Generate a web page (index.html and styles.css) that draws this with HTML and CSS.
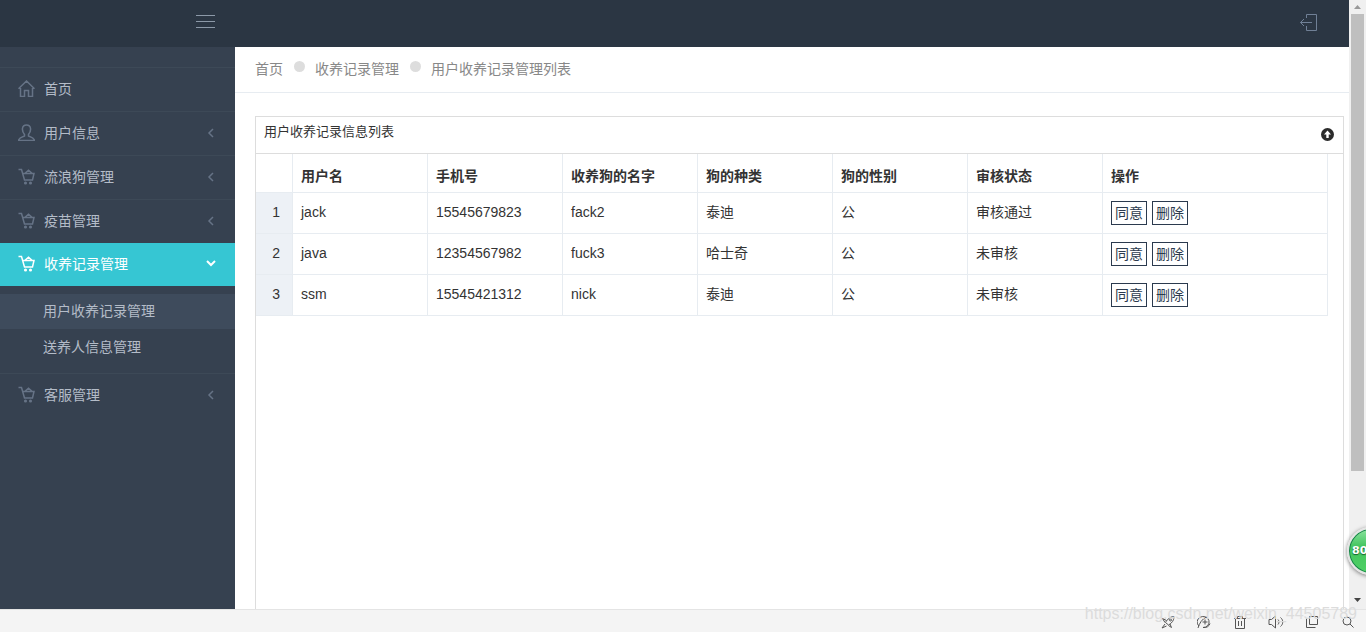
FILE: index.html
```html
<!DOCTYPE html>
<html lang="zh-CN">
<head>
<meta charset="utf-8">
<title>用户收养记录管理列表</title>
<link rel="stylesheet" href="styles.css">
</head>
<body>
<svg class="sprite" aria-hidden="true">
  <symbol id="cart" viewBox="0 0 17 17"><path d="M.5 1.500h3L6.500 12h8l1.500-6.500H4.800M7 5.300l3.500-3 3.500 3"/><circle cx="7.500" cy="15" r=".8"/><circle cx="12.500" cy="15" r=".8"/></symbol>
  <symbol id="left" viewBox="0 0 8 10"><path d="M6 1L2 5l4 4"/></symbol>
</svg>
<div class="window">
  <div class="page">
    <header class="topbar">
      <button class="icon-button menu-toggle" aria-label="菜单"><svg width="20" height="14" viewBox="0 0 20 14"><path d="M0 .5h19M0 6.500h19M0 12.500h19"/></svg></button>
      <a class="logout" href="#" aria-label="退出"><svg width="19" height="18" viewBox="0 0 19 18"><path d="M7.500 5V1.500h10v16h-10V13M13 9.500H1.500M5 6L1.500 9.500 5 13"/></svg></a>
    </header>
    <div class="body">
      <nav class="sidebar">
        <ul class="menu">
          <li><a class="menu-link" href="#"><svg class="icon" viewBox="0 0 17 17"><path d="M.5 8.700L8.500 1l8 7.700M2.500 8v8.500h4v-6h4v6h4V8"/></svg><span>首页</span></a></li>
          <li><a class="menu-link" href="#"><svg class="icon" viewBox="0 0 17 17"><path d="M6.500 10.500C3.500 7 3.500 1 8.500 1s5 6 2 9.500v1.500c2 .8 5.500 1.300 6 4.500H.5c.5-3.200 4-3.700 6-4.500z"/></svg><span>用户信息</span><svg class="arrow"><use href="#left"/></svg></a></li>
          <li><a class="menu-link" href="#"><svg class="icon"><use href="#cart"/></svg><span>流浪狗管理</span><svg class="arrow"><use href="#left"/></svg></a></li>
          <li><a class="menu-link" href="#"><svg class="icon"><use href="#cart"/></svg><span>疫苗管理</span><svg class="arrow"><use href="#left"/></svg></a></li>
          <li class="open">
            <a class="menu-link" href="#"><svg class="icon"><use href="#cart"/></svg><span>收养记录管理</span><svg class="arrow-down" viewBox="0 0 10 7"><path d="M1 1l4 4 4-4"/></svg></a>
            <ul class="submenu">
              <li><a class="sub-link current" href="#">用户收养记录管理</a></li>
              <li><a class="sub-link" href="#">送养人信息管理</a></li>
            </ul>
          </li>
          <li><a class="menu-link" href="#"><svg class="icon"><use href="#cart"/></svg><span>客服管理</span><svg class="arrow"><use href="#left"/></svg></a></li>
        </ul>
      </nav>
      <main class="main">
        <div class="breadcrumb">
          <a href="#">首页</a><i class="dot"></i><a href="#">收养记录管理</a><i class="dot"></i><a href="#">用户收养记录管理列表</a>
        </div>
        <section class="panel">
          <div class="panel-head">
            <h1>用户收养记录信息列表</h1>
            <button class="icon-button collapse" aria-label="收起"><svg width="13" height="13" viewBox="0 0 13 13"><circle cx="6.500" cy="6.500" r="6.500"/><path d="M6.500 2.500l3.500 4H7.700v3.500H5.300V6.500H3z"/></svg></button>
          </div>
          <div class="table-area">
            <table>
              <colgroup><col class="col-no"><col class="col-data"><col class="col-data"><col class="col-data"><col class="col-data"><col class="col-data"><col class="col-data"><col></colgroup>
              <thead><tr><th></th><th>用户名</th><th>手机号</th><th>收养狗的名字</th><th>狗的种类</th><th>狗的性别</th><th>审核状态</th><th>操作</th></tr></thead>
              <tbody>
                <tr><td class="no">1</td><td>jack</td><td>15545679823</td><td>fack2</td><td>泰迪</td><td>公</td><td>审核通过</td><td><div class="actions"><button>同意</button><button>删除</button></div></td></tr>
                <tr><td class="no">2</td><td>java</td><td>12354567982</td><td>fuck3</td><td>哈士奇</td><td>公</td><td>未审核</td><td><div class="actions"><button>同意</button><button>删除</button></div></td></tr>
                <tr><td class="no">3</td><td>ssm</td><td>15545421312</td><td>nick</td><td>泰迪</td><td>公</td><td>未审核</td><td><div class="actions"><button>同意</button><button>删除</button></div></td></tr>
              </tbody>
            </table>
          </div>
        </section>
      </main>
    </div>
  </div>
  <div class="scrollbar" aria-hidden="true">
    <svg class="scroll-arrow up" width="7" height="4" viewBox="0 0 7 4"><path d="M0 4l3.500-4L7 4z"/></svg>
    <div class="track"><div class="thumb"></div></div>
    <svg class="scroll-arrow" width="7" height="4" viewBox="0 0 7 4"><path d="M0 0l3.500 4L7 0z"/></svg>
  </div>
</div>
<footer class="statusbar">
  <button class="icon-button" aria-label="加速"><svg width="14" height="14" viewBox="0 0 14 14"><path d="M4.500 7.500C6.500 4 9.500 1.500 13 1.500c0 4-2 6.500-5.500 8.500zM5.500 5.500L1.500 3.500 4 7.500M9 9l1.500 3.500-3-2M4 9L1 13l4.500-2"/><circle cx="9.500" cy="5" r="1"/></svg></button>
  <button class="icon-button" aria-label="刷新"><svg width="14" height="14" viewBox="0 0 14 14"><path d="M2 11a6 5.500 0 1 1 4 1.500M1 13C2.500 8 5 4 9.500 2M5.500 7h5M8 4.500v5M6 12.500c3.500.5 6-1 7-4"/></svg></button>
  <button class="icon-button" aria-label="清理"><svg width="14" height="14" viewBox="0 0 14 14"><path d="M1 3.500h12M4.500 3V1.500h5V3M2.500 4v9.500h9V4M5.500 6v5M8.500 6v5"/></svg></button>
  <button class="icon-button" aria-label="声音"><svg width="16" height="14" viewBox="0 0 16 14"><path d="M1 4.500h2.500L7.500 1v12L3.500 9.500H1zM10 4.500c1.300 1.500 1.300 3.500 0 5M12.500 2.500c3 2.500 3 6.500 0 9"/></svg></button>
  <button class="icon-button" aria-label="窗口"><svg width="14" height="14" viewBox="0 0 14 14"><path d="M4.500 1.500h8v8h-8zM1.500 3.500v9h9"/></svg></button>
  <button class="icon-button" aria-label="搜索"><svg width="12" height="12" viewBox="0 0 12 12"><circle cx="5" cy="5" r="4"/><path d="M8 8l3.500 3.500"/></svg></button>
</footer>
<div class="watermark">https://blog.csdn.net/weixin_44505789</div>
<div class="ball">80</div>
</body>
</html>
```

FILE: styles.css
```css
* { box-sizing: border-box; }
body {
  position: relative;
  display: flex;
  flex-direction: column;
  height: 100vh;
  margin: 0;
  overflow: hidden;
  background: #fff;
  color: #333;
  font: 14px/20px "Liberation Sans", "Noto Sans CJK SC", sans-serif;
}
ul { margin: 0; padding: 0; list-style: none; }
a { color: inherit; text-decoration: none; }
svg { display: block; fill: none; stroke: currentColor; }
.sprite { position: absolute; width: 0; height: 0; }
button { font: inherit; color: inherit; margin: 0; cursor: pointer; }
.icon-button { padding: 0; border: 0; background: none; }

.window { flex: 1; display: flex; min-height: 0; }
.page { flex: 1; display: flex; flex-direction: column; min-width: 0; }
.topbar {
  flex: none;
  display: flex;
  justify-content: space-between;
  align-items: center;
  height: 47px;
  padding: 0 31px 4px 196px;
  background: #2b3643;
  color: #8c99a8;
}
.logout { color: #708096; }
.body { flex: 1; display: flex; min-height: 0; }

.sidebar { flex: none; width: 235px; padding-top: 20px; background: #364150; color: #b4bcc8; }
.menu > li { border-top: 1px solid #3d4957; }
.menu > .open { border-top: 0; }
.menu-link { display: flex; align-items: center; gap: 9px; height: 43px; padding: 0 19px 2px 18px; }
.icon { width: 17px; height: 17px; color: #667386; stroke-width: 1.5; }
.arrow, .arrow-down { margin-left: auto; margin-right: 1px; width: 8px; height: 10px; color: #667386; stroke-width: 1.5; }
.open > .menu-link { background: #36c6d3; color: #fff; }
.open .icon, .arrow-down { color: #fff; }
.arrow-down { margin-right: 0; width: 10px; height: 7px; stroke-width: 2; }
.submenu { display: flex; flex-direction: column; gap: 1px; padding: 8px 0; }
.sub-link { display: flex; align-items: center; height: 35px; padding: 0 0 2px 43px; }
.current { background: #3e4b5c; }

.main { flex: 1; display: flex; flex-direction: column; min-width: 0; }
.breadcrumb {
  display: flex;
  align-items: center;
  height: 46px;
  padding: 0 20px 2px;
  border-bottom: 1px solid #e7ecf1;
  color: #888;
}
.dot { width: 11px; height: 11px; margin: 0 10px 4px 11px; border-radius: 50%; background: #ddd; }
.panel {
  flex: 1;
  display: flex;
  flex-direction: column;
  margin: 23px 5px 0 20px;
  border: 1px solid #ddd;
  border-bottom: 0;
}
.panel-head {
  display: flex;
  justify-content: space-between;
  padding: 5px 9px 11px 8px;
  border-bottom: 1px solid #ddd;
}
h1 { margin: 0; font-size: 13px; line-height: 20px; font-weight: 400; }
.collapse { align-self: flex-end; padding-bottom: 1px; }
.collapse svg { stroke: none; }
.collapse circle { fill: #2b2b2b; }
.collapse path { fill: #fff; }
.table-area { padding-right: 15px; }
table { width: 100%; table-layout: fixed; border-collapse: separate; border-spacing: 0; }
.col-no { width: 37px; }
.col-data { width: 135px; }
th, td { padding: 8px; border: solid #e7ecf1; border-width: 0 1px 1px 0; text-align: left; }
th { height: 39px; padding: 12px 8px 6px; }
td { height: 41px; padding: 7px 8px 9px; }
td:last-child { padding: 8px; }
.no { padding-right: 12px; background: #edf1f6; text-align: right; }
.actions { display: flex; gap: 5px; }
.actions button {
  height: 24px;
  padding: 0 3px;
  border: 1px solid #2b3a4e;
  background: #fff;
  color: #2b3a4e;
}

.scrollbar {
  flex: none;
  display: flex;
  flex-direction: column;
  align-items: center;
  width: 17px;
  padding: 5px 2px 7px;
  background: #f0f0f0;
}
.scroll-arrow { fill: #444; stroke: none; }
.scroll-arrow.up { fill: #999; }
.track { flex: 1; width: 100%; padding: 5px 0; }
.thumb { height: 79%; background: #bfbfbf; }

.statusbar {
  flex: none;
  display: flex;
  justify-content: flex-end;
  height: 23px;
  border-top: 1px solid #e4e4e4;
  background: #f4f4f4;
  color: #555;
}
.statusbar .icon-button { display: flex; justify-content: center; align-items: center; width: 36px; padding-top: 2px; }
.watermark {
  position: absolute;
  right: 9px;
  bottom: 8px;
  color: #dcdcdc;
  font-size: 16px;
  pointer-events: none;
}
.ball {
  position: absolute;
  right: -29px;
  bottom: 57px;
  width: 48px;
  height: 48px;
  padding-left: 3px;
  border: 2px solid #e4e4e4;
  border-radius: 50%;
  background: linear-gradient(#8de3a0, #43c55f 40%, #4fd064);
  box-shadow: 0 1px 4px #777, inset 0 0 0 1px #17804a;
  color: #fff;
  font: bold 11px/44px "DejaVu Sans", sans-serif;
  text-shadow: 0 1px 1px #17602f;
}
```
